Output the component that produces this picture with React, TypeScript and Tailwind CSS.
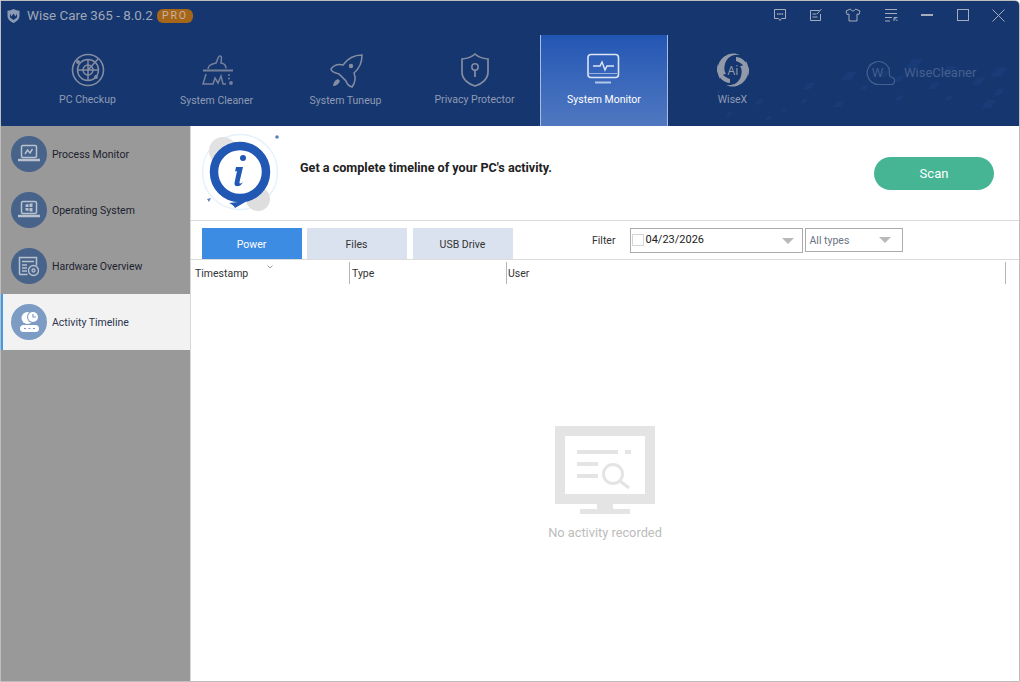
import type { ReactNode } from 'react'

const FONT = 'font-["Roboto","Noto_Sans",sans-serif]'

function Glyph({ size = 36, vb = 36, children, cls = 'text-[#848da1]' }: { size?: number; vb?: number; children: ReactNode; cls?: string }) {
  return (
    <svg width={size} height={size} viewBox={`0 0 ${vb} ${vb}`} fill="none" stroke="currentColor" strokeWidth="1.5" className={cls}>
      {children}
    </svg>
  )
}

const IconCheckup = () => (
  <Glyph>
    <circle cx="18" cy="18" r="15.5" strokeWidth="1.6" />
    <circle cx="18" cy="18" r="10.5" />
    <circle cx="18" cy="18" r="5" />
    <path d="M18 8v20M8 18h20M18 18L28 7" />
    <circle cx="8" cy="10" r="1.2" fill="currentColor" />
    <circle cx="26" cy="25" r="1.2" fill="currentColor" />
  </Glyph>
)

const IconCleaner = () => (
  <Glyph cls="text-[#75809a]">
    <path d="M4 18.500h30" strokeWidth="2" />
    <path d="M9 17c0-4 4-5 8-6l2.500-6c.5-1.500 3-1.500 3 .5l-.5 5.500c3 .5 5 2 5 5.500" />
    <path d="M7 22L4 32h10l2-6 3 5 3-7 2 8h3" />
    <circle cx="32" cy="31" r="1.900" fill="currentColor" stroke="none" />
    <circle cx="30" cy="23" r="1" fill="currentColor" stroke="none" />
    <circle cx="30" cy="26.500" r="1" fill="currentColor" stroke="none" />
  </Glyph>
)

const IconRocket = () => (
  <Glyph>
    <path d="M34 3C26 3 20 6 15 13 11 12 6 13 3 17c0 2 4 4 8 5l7 7c1 4 3 5 6 6 3-4 4-9 2-14 6-5 8-11 8-18z" />
    <circle cx="23" cy="14" r="2.200" fill="currentColor" stroke="none" />
    <path d="M5 34c0-3 2-6 5-7l2 2c-1 3-4 5-7 5z" fill="currentColor" stroke="none" />
  </Glyph>
)

const IconShield = () => (
  <Glyph>
    <path d="M18 2c3 2.800 8 4.500 13 5v13c0 7-6 12-13 14C11 32 5 27 5 20V7c5-.5 10-2.200 13-5z" strokeWidth="1.700" />
    <circle cx="18" cy="15" r="3.200" />
    <path d="M18 18v7" strokeWidth="1.800" />
  </Glyph>
)

const IconMonitor = () => (
  <Glyph cls="text-[#dbe5f6]">
    <rect x="2" y="2.500" width="30.500" height="23" rx="3" strokeWidth="1.600" />
    <path d="M3 21.500h28" strokeWidth="1" opacity="0.6" />
    <path d="M7 14h7l2-4 3 8 2-4h7" strokeWidth="1.500" />
    <path d="M9 30.500h16" strokeWidth="2" opacity="0.75" />
  </Glyph>
)

const IconWiseX = () => {
  const big = 'M5 27C0 18 3 7 12 3c4-2 9-2 13 0-7-1-13 2-15 9-1 4-1 7 1 10-3 0-5 2-6 5z'
  const thin = 'M21 5c6 0 11 5 13 12 0 2 0 5-1 7-1-7-5-13-12-15z'
  return (
    <Glyph cls="text-[#9299a8]">
      <g fill="currentColor" stroke="none">
        <path d={big} />
        <path d={big} transform="rotate(180 18 18)" />
        <path d={thin} />
        <path d={thin} transform="rotate(180 18 18)" />
      </g>
      <text x="18" y="22.500" textAnchor="middle" fontSize="12" fill="currentColor" stroke="none" fontFamily="Noto Sans">Ai</text>
    </Glyph>
  )
}

function TitleIcons() {
  return (
    <div className="flex items-center text-[#a5acba]">
      <svg width="14" height="14" viewBox="0 0 14 14" fill="none" stroke="currentColor" className="mr-[22px]">
        <path d="M1.500 1.500h11v9H8.500L7 12.500 5.500 10.500h-4z" />
        <path d="M4 6h1.500M6.300 6h1.500M8.600 6h1.500" strokeWidth="1.500" />
      </svg>
      <svg width="14" height="14" viewBox="0 0 14 14" fill="none" stroke="currentColor" className="mr-[22px]">
        <path d="M10.500 2.500h-9v10h10V6M3.500 6h4M3.500 9h5M8 6l4.500-5" />
      </svg>
      <svg width="16" height="14" viewBox="0 0 16 14" fill="none" stroke="currentColor" className="mr-[23px]">
        <path d="M5.500 1L1 3l1 3.500 2-.5v7h8V6l2 .5L15 3l-4.500-2c-.5 2.500-4.500 2.500-5 0z" />
      </svg>
      <svg width="14" height="14" viewBox="0 0 14 14" fill="none" stroke="currentColor" className="mr-[23px]">
        <path d="M1 1.500h12M1 5.500h12M1 9.500h7M1 13h5M10 13V9.500h3.500M10.500 10l3 3" />
      </svg>
      <div className="w-[12px] h-[2px] bg-current mr-[24px]" />
      <div className="w-[12px] h-[12px] border border-current mr-[23px]" />
      <svg width="13" height="13" viewBox="0 0 13 13" stroke="currentColor" className="mr-[14px]">
        <path d="M.5.500l12 12M12.500.500l-12 12" />
      </svg>
    </div>
  )
}

// decorative diamonds in the right part of the header
function HeaderPattern() {
  const spots = [
    [215, 38, 9], [250, 44, 8], [300, 46, 9], [185, 48, 6], [150, 50, 8], [200, 53, 6], [235, 60, 6], [280, 55, 7],
    [110, 60, 6], [165, 62, 5], [60, 76, 5], [105, 75, 4], [140, 78, 6], [200, 72, 5], [290, 78, 8], [250, 72, 5],
    [30, 88, 4], [70, 92, 4], [300, 66, 6], [20, 66, 3], [85, 84, 3],
  ]
  return (
    <svg width="320" height="100" className="absolute right-0 bottom-0 text-[#193b78]" fill="currentColor">
      {spots.map(([x, y, r], i) => (
        <path key={i} d={`M${x - r} ${y + r * 0.5}L${x - r * 0.2} ${y - r * 0.5}H${x + r}L${x + r * 0.2} ${y + r * 0.5}z`} />
      ))}
    </svg>
  )
}

const NAV: { label: string; icon: ReactNode; on?: boolean; top: string }[] = [
  { label: 'PC Checkup', icon: <IconCheckup />, top: 'mt-[4px]' },
  { label: 'System Cleaner', icon: <IconCleaner />, top: 'mt-[5px]' },
  { label: 'System Tuneup', icon: <IconRocket />, top: 'mt-[5px]' },
  { label: 'Privacy Protector', icon: <IconShield />, top: 'mt-[4px]' },
  { label: 'System Monitor', icon: <IconMonitor />, on: true, top: 'mt-[4px]' },
  { label: 'WiseX', icon: <IconWiseX />, top: 'mt-[4px]' },
]

function NavItem({ label, icon, on, top }: (typeof NAV)[number]) {
  return (
    <div
      className={
        'h-full flex flex-col items-center pt-[17px] text-[10.5px] leading-[16px] ' +
        (on
          ? 'ml-[1px] w-[128px] bg-gradient-to-b from-[#2356b4] to-[#5078c0] border-x border-[#a9bde0] text-white'
          : 'w-[129px] text-[#8f9bb3]')
      }
    >
      <div className="h-[36px] flex items-center justify-center">{icon}</div>
      <div className={top}>{label}</div>
    </div>
  )
}

const SideSvg = ({ children }: { children: ReactNode }) => (
  <svg width="22" height="22" viewBox="0 0 22 22" fill="none" stroke="currentColor" className="text-[#b9c1ce]">
    {children}
  </svg>
)

const SIDE: { label: string; glyph: ReactNode; on?: boolean }[] = [
  {
    label: 'Process Monitor',
    glyph: (
      <SideSvg>
        <rect x="3.500" y="2.500" width="15" height="12" rx="1.500" strokeWidth="1.500" />
        <path d="M7 11l2.500-4 2.500 3 2.500-4" strokeWidth="1.500" />
        <path d="M0 17h22" strokeWidth="2.500" />
      </SideSvg>
    ),
  },
  {
    label: 'Operating System',
    glyph: (
      <SideSvg>
        <rect x="3.500" y="2.500" width="15" height="12" rx="1.500" strokeWidth="1.500" />
        <path d="M7.500 5.500l3-.5v3h-3zM11.500 4.800l3-.5V8h-3zM7.500 9h3v3l-3-.5zM11.500 9h3v3.700l-3-.5z" fill="currentColor" stroke="none" />
        <path d="M0 17h22" strokeWidth="2.500" />
      </SideSvg>
    ),
  },
  {
    label: 'Hardware Overview',
    glyph: (
      <SideSvg>
        <path d="M1.500 19.500V2.500h17v8" strokeWidth="1.500" />
        <path d="M1.500 19.500h8M4 6.500h12M4 10h5M4 13h5M4 16h5" strokeWidth="1.300" />
        <circle cx="15.500" cy="15.500" r="5" strokeWidth="1.300" />
        <circle cx="15.500" cy="15.500" r="1.500" strokeWidth="1.300" />
      </SideSvg>
    ),
  },
  {
    label: 'Activity Timeline',
    on: true,
    glyph: (
      <svg width="22" height="22" viewBox="0 0 22 22" className="text-white">
        <circle cx="9.500" cy="7" r="6" fill="currentColor" />
        <circle cx="15" cy="6" r="6" fill="#7d9cc4" />
        <circle cx="15" cy="6" r="5" fill="currentColor" />
        <path d="M15 3v3h3" stroke="#7d9cc4" strokeWidth="1.200" fill="none" />
        <rect x="2" y="14" width="19" height="7" rx="3.500" fill="currentColor" />
        <path d="M6 17.500h2M10.500 17.500h2M15 17.500h2" stroke="#7d9cc4" strokeWidth="1.200" />
      </svg>
    ),
  },
]

function SideItem({ label, glyph, on }: (typeof SIDE)[number]) {
  return (
    <div
      className={
        'h-[56px] flex items-center text-[10.5px] ' +
        (on ? 'bg-[#f2f2f2] border-l-2 border-[#3d9be9] pl-[8px] text-[#2a3550]' : 'pl-[10px] text-[#1c2230]')
      }
    >
      <div
        className={
          'w-[36px] h-[36px] rounded-full flex items-center justify-center mr-[5px] ' +
          (on ? 'bg-[#7d9cc4]' : 'bg-[#47638a]')
        }
      >
        {glyph}
      </div>
      <span className="mt-[2px]">{label}</span>
    </div>
  )
}

function InfoBadge() {
  return (
    <svg width="84" height="84" viewBox="0 0 84 84">
      <circle cx="42" cy="41" r="37.500" fill="none" stroke="#e6f1fb" strokeWidth="1.500" />
      <circle cx="25" cy="20" r="14" fill="#e2e2e2" />
      <circle cx="60" cy="68" r="12" fill="#dedede" />
      <circle cx="79" cy="6" r="1.800" fill="#5a80c4" />
      <path d="M9 68l4-1-2 4z" fill="#5a80c4" />
      <path d="M49 70l-12 7c-1-2-3-4-6-5z" fill="#2058b4" />
      <circle cx="42" cy="41" r="26" fill="#fff" stroke="#2058b4" strokeWidth="8.500" />
      <circle cx="45" cy="27" r="3" fill="#2058b4" />
      <path d="M38 36h7l-3.500 15c-.3 2 1 2 3.500 0-2 5-9 6-8.500 1l2.500-12-2 .5z" fill="#2058b4" />
    </svg>
  )
}

function EmptyArt() {
  return (
    <svg width="100" height="88" viewBox="0 0 100 88" fill="#e4e4e4" className="block">
      <path fillRule="evenodd" d="M0 0h100v78H0zM10 10v58h80V10z" />
      <path d="M42 78h16v5H42zM25 83h50v5H25z" />
      <path d="M22 24h41v4H22zM70 24h6v4h-6zM22 36h21v4H22zM22 48h21v4H22z" />
      <circle cx="58" cy="48" r="9.500" fill="none" stroke="#e4e4e4" strokeWidth="3" />
      <path d="M65 55l9 7" stroke="#e4e4e4" strokeWidth="3" fill="none" />
    </svg>
  )
}

const Caret = () => <div className="w-0 h-0 border-x-[6px] border-x-transparent border-t-[6px] border-t-[#b9b9b9]" />

function Tab({ children, on, cls }: { children: ReactNode; on?: boolean; cls?: string }) {
  return (
    <div
      className={
        'w-[100px] h-[31px] pt-[2px] pr-[1px] flex items-center justify-center ' +
        (on ? 'bg-[#3c8ce4] text-white ' : 'bg-[#dbe2ef] text-[#333] ') +
        (cls ?? '')
      }
    >
      {children}
    </div>
  )
}

export default function App() {
  return (
    <div className={`${FONT} w-[1020px] h-[682px] bg-white border border-[#bdbdbd] rounded-tr-[5px] overflow-hidden flex flex-col text-[10.5px]`}>
      <header className="h-[125px] bg-[#16366f] relative shrink-0">
        <HeaderPattern />
        <div className="relative h-[34px] flex items-start justify-between pt-[7px]">
          <div className="flex items-center pl-[6px] text-[#a0a8b7] text-[13.4px] leading-[16px]">
            <svg width="13" height="14" viewBox="0 0 13 14" className="mr-[7px]">
              <path d="M6.500 0c2 1 4 1.500 6 1.800v5c0 3.500-3 6-6 7.200-3-1.200-6-3.700-6-7.200v-5C2.500 1.500 4.500 1 6.500 0z" fill="#8b9bb4" />
              <path d="M3 4.500l1.500 3 2-3 2 3 1.500-3v4l-3.500 2.500L3 8.500z" fill="#16366f" />
            </svg>
            Wise Care 365 - 8.0.2
            <span className="ml-[4px] h-[14px] w-[36px] text-center rounded-[6px] bg-[#a5661a] text-[#c9b39c] text-[10.5px] leading-[14px] tracking-[1.800px]">PRO</span>
          </div>
          <TitleIcons />
        </div>
        <nav className="relative h-[91px] flex pl-[22px]">
          {NAV.map((n) => (
            <NavItem key={n.label} {...n} />
          ))}
          <div className="flex items-center h-[60px] ml-[69px] mt-[8px] text-[#45608f] text-[13px]">
            <svg width="30" height="26" viewBox="0 0 30 26" fill="none" stroke="currentColor" strokeWidth="1.200" className="mr-[8px]">
              <path d="M23 8A11.500 11.500 0 1 0 13 24.500h12c4.500 0 5-7 0-7.500-1 0-1.500-.5-1.500-1.500 0-2.500 0-5-.5-7.500z" />
              <text x="6" y="17" fontSize="12" fill="currentColor" stroke="none" fontFamily="Noto Sans">W</text>
            </svg>
            WiseCleaner
          </div>
        </nav>
      </header>

      <div className="flex-1 flex min-h-0">
        <aside className="w-[189px] bg-[#999999] shrink-0">
          {SIDE.map((s) => (
            <SideItem key={s.label} {...s} />
          ))}
        </aside>

        <main className="flex-1 flex flex-col min-w-0 bg-white border-l border-[#d8d8d8]">
          <section className="h-[95px] border-b border-[#dcdcdc] flex items-center pl-[7px] pr-[25px] shrink-0">
            <InfoBadge />
            <p className="ml-[18px] -mt-[9px] font-bold text-[12.6px] text-[#222]">Get a complete timeline of your PC's activity.</p>
            <button className="ml-auto mt-[1px] w-[120px] h-[33px] rounded-full bg-[#45b594] text-white text-[13px]">Scan</button>
          </section>

          <section className="h-[39px] border-b border-[#dcdcdc] flex pl-[11px] pt-[7px] shrink-0 text-[#333]">
            <Tab on>Power</Tab>
            <Tab cls="ml-[5px]">Files</Tab>
            <Tab cls="ml-[6px]">USB Drive</Tab>
            <span className="ml-[79px] mt-[5px] leading-[16px]">Filter</span>
            <div className="ml-[15px] w-[173px] h-[25px] border border-[#ababab] flex items-center pl-[1px] pr-[8px] text-[11px]">
              <div className="w-[12px] h-[12px] border border-[#d6d6d6] mr-[1px] -mt-[1px]" />
              <span className="flex-1 text-[#222]">04/23/2026</span>
              <Caret />
            </div>
            <div className="ml-[2px] w-[98px] h-[24px] border border-[#ababab] flex items-center pl-[3px] pr-[11px] text-[#6c7384]">
              <span className="flex-1 mt-[2px]">All types</span>
              <Caret />
            </div>
          </section>

          <section className="h-[24px] flex text-[#333] relative shrink-0 items-center">
            <div className="w-[159px] h-[22px] mt-[2px] pt-[2px] border-r border-[#b5b5b5] pl-[4px] flex items-center">Timestamp</div>
            <div className="w-[157px] h-[22px] mt-[2px] pt-[2px] border-r border-[#b5b5b5] pl-[2px] flex items-center">Type</div>
            <div className="w-[499px] h-[22px] mt-[2px] pt-[2px] border-r border-[#b5b5b5] pl-[1px] flex items-center">User</div>
            <svg width="6" height="4" viewBox="0 0 6 4" fill="none" stroke="#9a9a9a" className="absolute left-[76px] top-[5px]">
              <path d="M.5.500L3 3 5.500.500" />
            </svg>
          </section>

          <section className="flex-1 flex flex-col items-center pt-[142px]">
            <EmptyArt />
            <p className="mt-[9px] text-[12.8px] text-[#bcbcbc]">No activity recorded</p>
          </section>
        </main>
      </div>
    </div>
  )
}
